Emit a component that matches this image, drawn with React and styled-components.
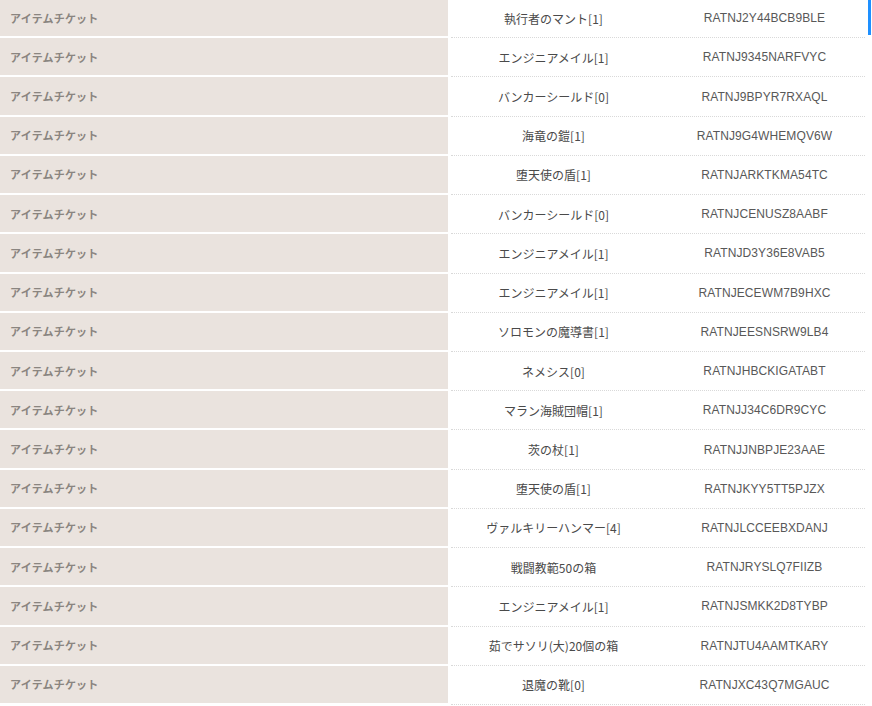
import React from "react";
import styled, { createGlobalStyle } from "styled-components";

const rows = [
  ["執行者のマント[1]", "RATNJ2Y44BCB9BLE"],
  ["エンジニアメイル[1]", "RATNJ9345NARFVYC"],
  ["バンカーシールド[0]", "RATNJ9BPYR7RXAQL"],
  ["海竜の鎧[1]", "RATNJ9G4WHEMQV6W"],
  ["堕天使の盾[1]", "RATNJARKTKMA54TC"],
  ["バンカーシールド[0]", "RATNJCENUSZ8AABF"],
  ["エンジニアメイル[1]", "RATNJD3Y36E8VAB5"],
  ["エンジニアメイル[1]", "RATNJECEWM7B9HXC"],
  ["ソロモンの魔導書[1]", "RATNJEESNSRW9LB4"],
  ["ネメシス[0]", "RATNJHBCKIGATABT"],
  ["マラン海賊団帽[1]", "RATNJJ34C6DR9CYC"],
  ["茨の杖[1]", "RATNJJNBPJE23AAE"],
  ["堕天使の盾[1]", "RATNJKYY5TT5PJZX"],
  ["ヴァルキリーハンマー[4]", "RATNJLCCEEBXDANJ"],
  ["戦闘教範50の箱", "RATNJRYSLQ7FIIZB"],
  ["エンジニアメイル[1]", "RATNJSMKK2D8TYBP"],
  ["茹でサソリ(大)20個の箱", "RATNJTU4AAMTKARY"],
  ["退魔の靴[0]", "RATNJXC43Q7MGAUC"],
];

const GlobalStyle = createGlobalStyle`
  html, body {
    margin: 0;
    padding: 0;
    background: #fff;
    overflow: hidden;
  }
  body {
    font-family: "Noto Sans CJK JP", "Liberation Sans", sans-serif;
  }
`;

const List = styled.div`
  position: relative;
  width: 872px;
  height: 706px;
  margin-top: -1px;
  overflow: hidden;
`;

const Row = styled.div`
  display: grid;
  grid-template-columns: 448px 414px;
  column-gap: 3px;
  height: 39.23px;
`;

const Label = styled.div`
  display: flex;
  align-items: center;
  padding-left: 10px;
  background: #eae3de;
  border-bottom: 2px solid #fff;
  color: #8a8580;
  font-size: 11px;
  font-weight: 700;
  letter-spacing: 0.2px;
`;

const Detail = styled.div`
  display: grid;
  grid-template-columns: 205px 209px;
  border-bottom: 1px dotted #d9d9d9;
`;

const Cell = styled.div`
  display: flex;
  align-items: center;
  justify-content: center;
  color: ${(p) => (p.code ? "#585858" : "#4a4a4a")};
  font-size: 12px;
  font-family: ${(p) =>
    p.code
      ? `"Liberation Sans", "DejaVu Sans", sans-serif`
      : `"Noto Sans CJK JP", "Liberation Sans", sans-serif`};
  letter-spacing: ${(p) => (p.code ? "0.1px" : "0")};
  padding-left: ${(p) => (p.code ? "8px" : "0")};
`;

const ScrollThumb = styled.div`
  position: absolute;
  top: 1px;
  right: 1px;
  width: 3px;
  height: 35px;
  background: #1e90ff;
`;

export default function App() {
  return (
    <>
      <GlobalStyle />
      <List>
        {rows.map(([name, code], i) => (
          <Row key={i}>
            <Label>アイテムチケット</Label>
            <Detail>
              <Cell>{name}</Cell>
              <Cell code>{code}</Cell>
            </Detail>
          </Row>
        ))}
        <ScrollThumb />
      </List>
    </>
  );
}
